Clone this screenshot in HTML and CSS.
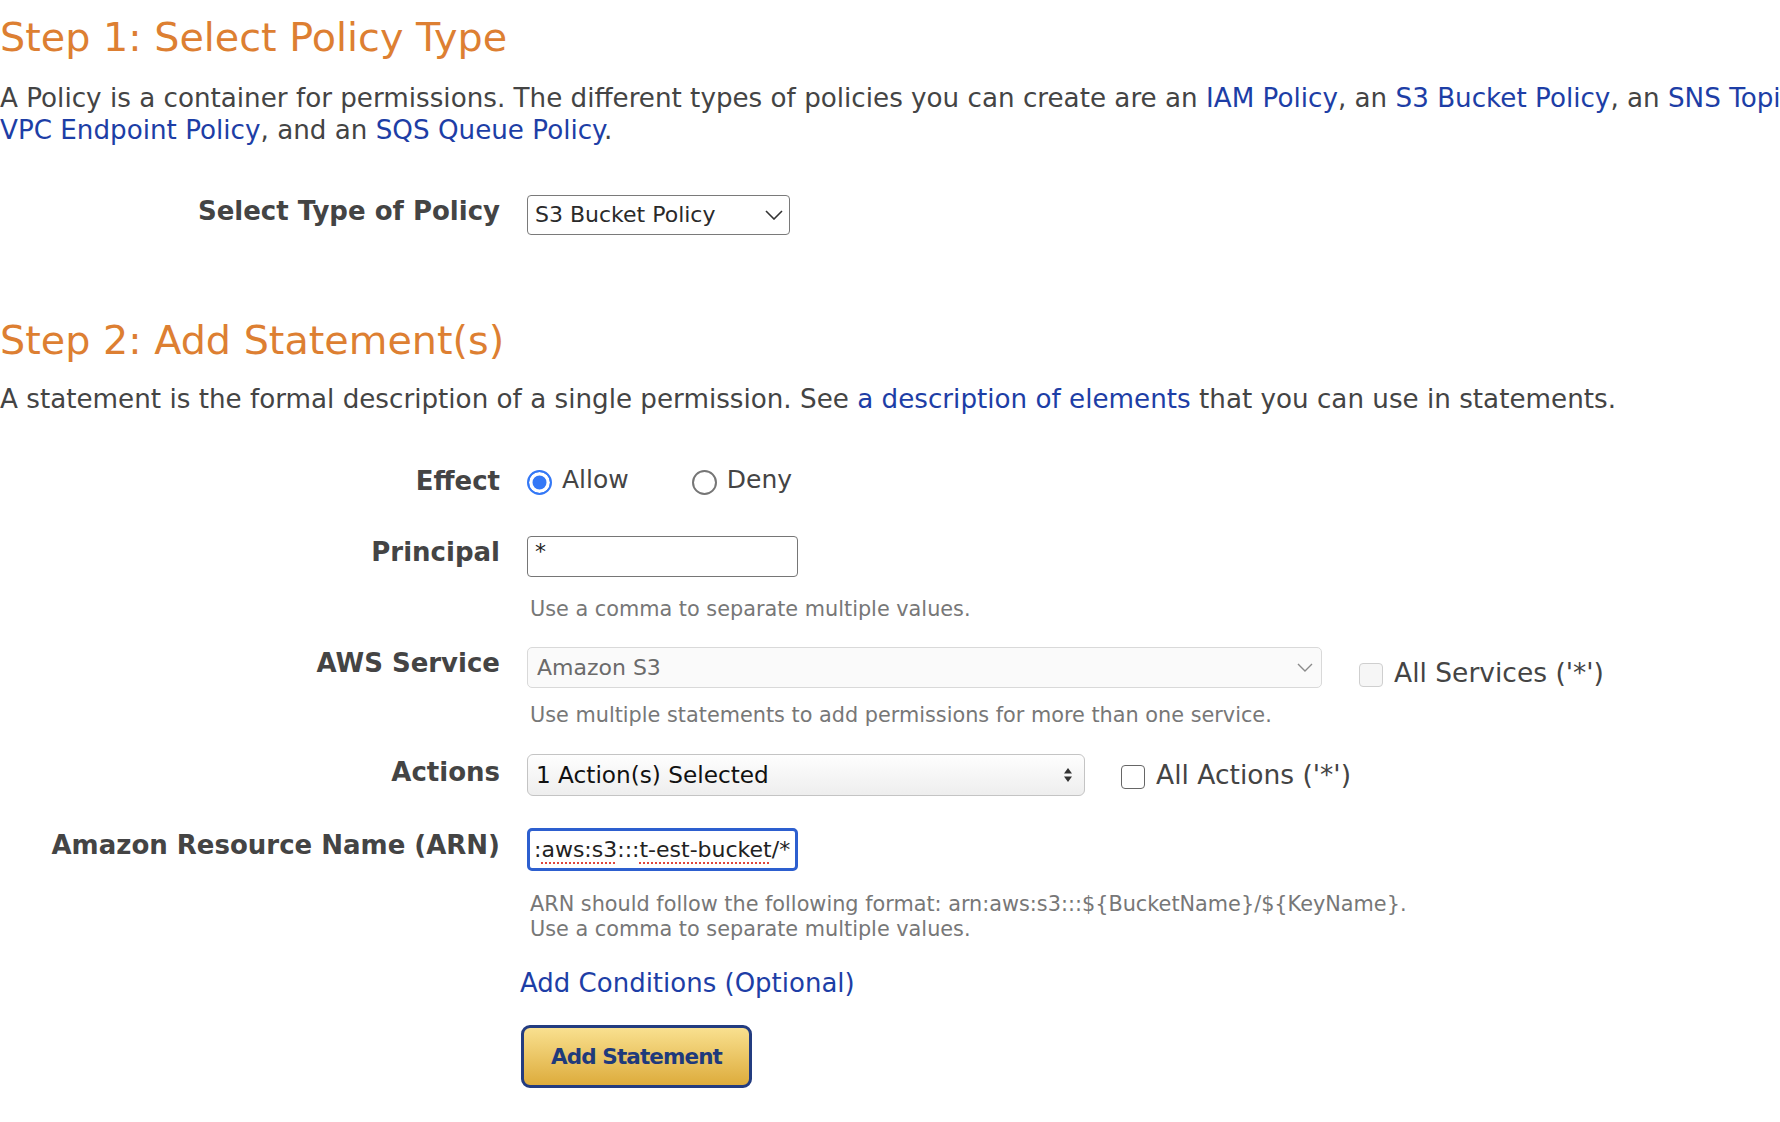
FILE: index.html
```html
<!DOCTYPE html>
<html lang="en">
<head>
<meta charset="utf-8">
<title>AWS Policy Generator</title>
<link rel="stylesheet" href="styles.css">
</head>
<body>
<div class="page">
  <h1 class="step-title">Step 1: Select Policy Type</h1>
  <p class="intro">A Policy is a container for permissions. The different types of policies you can create are an <a href="#">IAM Policy</a>, an <a href="#">S3 Bucket Policy</a>, an <a href="#">SNS Topic Policy</a>, a<br><a href="#">VPC Endpoint Policy</a>, and an <a href="#">SQS Queue Policy</a>.</p>

  <div class="row row--type">
    <label class="label">Select Type of Policy</label>
    <div class="field">
      <div class="select select--type">
        <span>S3 Bucket Policy</span>
        <svg class="chev chev--type" width="18" height="10" viewBox="0 0 18 10"><path d="M1 1 L9 9 L17 1" fill="none" stroke="#333" stroke-width="1.6"/></svg>
      </div>
    </div>
  </div>

  <h1 class="step-title step-title--second">Step 2: Add Statement(s)</h1>
  <p class="intro intro--second">A statement is the formal description of a single permission. See <a href="#">a description of elements</a> that you can use in statements.</p>

  <div class="row row--effect">
    <label class="label">Effect</label>
    <div class="field options">
      <span class="option"><span class="radio radio--on"></span>Allow</span>
      <span class="option"><span class="radio"></span>Deny</span>
    </div>
  </div>

  <div class="row row--principal">
    <label class="label">Principal</label>
    <div class="field">
      <div class="input input--principal">*</div>
      <p class="help help--principal">Use a comma to separate multiple values.</p>
    </div>
  </div>

  <div class="row row--service">
    <label class="label">AWS Service</label>
    <div class="field">
      <div class="control-line">
        <div class="select select--service">
          <span>Amazon S3</span>
          <svg class="chev" width="16" height="9" viewBox="0 0 16 9"><path d="M1 1 L8 8 L15 1" fill="none" stroke="#8a8a8a" stroke-width="1.4"/></svg>
        </div>
        <span class="check-group check-group--services"><span class="checkbox checkbox--disabled"></span>All Services ('*')</span>
      </div>
      <p class="help help--service">Use multiple statements to add permissions for more than one service.</p>
    </div>
  </div>

  <div class="row row--actions">
    <label class="label label--actions">Actions</label>
    <div class="field">
      <div class="control-line">
        <div class="select select--actions">
          <span>1 Action(s) Selected</span>
          <svg class="updown" width="10" height="16" viewBox="0 0 10 16"><path d="M5 1 L9 6.5 L1 6.5 Z M5 15 L9 9.5 L1 9.5 Z" fill="#333"/></svg>
        </div>
        <span class="check-group check-group--actions"><span class="checkbox"></span>All Actions ('*')</span>
      </div>
    </div>
  </div>

  <div class="row row--arn">
    <label class="label label--arn">Amazon Resource Name (ARN)</label>
    <div class="field">
      <div class="input input--arn">:<span class="typo">aws:s3</span>:::<span class="typo">t-est-bucket</span>/*</div>
      <p class="help help--arn">ARN should follow the following format: arn:aws:s3:::${BucketName}/${KeyName}.<br>Use a comma to separate multiple values.</p>
    </div>
  </div>

  <div class="row row--submit">
    <span class="label"></span>
    <div class="field">
      <a href="#" class="conditions">Add Conditions (Optional)</a>
      <button class="btn" type="button">Add Statement</button>
    </div>
  </div>
</div>
</body>
</html>
```

FILE: styles.css
```css
html, body {
  margin: 0;
  padding: 0;
  overflow: hidden;
  background: #ffffff;
}

body {
  font-family: "DejaVu Sans", Verdana, sans-serif;
  color: #444444;
}

a {
  color: #1d3ea6;
  text-decoration: none;
}

.page {
  padding: 0;
}

.step-title {
  font-size: 39.7px;
  line-height: 46px;
  font-weight: normal;
  color: #dd7f32;
  margin: 14px 0 0;
}

.step-title--second {
  margin-top: 82px;
}

.intro {
  font-size: 26.2px;
  line-height: 32px;
  margin: 21.5px 0 0;
  white-space: nowrap;
}

.intro--second {
  margin-top: 20px;
}

.row {
  display: grid;
  grid-template-columns: 500px auto;
  column-gap: 27px;
  align-items: start;
}

.row--type { margin-top: 49.5px; }
.row--effect { margin-top: 50px; }
.row--principal { margin-top: 40px; }
.row--service { margin-top: 25px; }
.row--actions { margin-top: 26px; }
.row--arn { margin-top: 32px; }
.row--submit { margin-top: 25px; }

.label {
  font-size: 26px;
  line-height: 30px;
  font-weight: bold;
  text-align: right;
  color: #444444;
  margin-top: 1px;
}

.label--actions { margin-top: 3px; }
.label--arn { margin-top: 2px; }

.field {
  display: flex;
  flex-direction: column;
  align-items: flex-start;
}

/* selects */
.select {
  box-sizing: border-box;
  display: flex;
  align-items: center;
  justify-content: space-between;
  font-size: 22px;
  line-height: 26px;
}

.select--type {
  width: 263px;
  height: 40px;
  border: 1.5px solid #7a7a7a;
  border-radius: 4px;
  padding: 0 6px 0 7px;
  color: #2a2a2a;
}

.select--service {
  width: 795px;
  height: 41px;
  border: 1.5px solid #d9d9d9;
  border-radius: 5px;
  background: #fafafa;
  color: #6b6b6b;
  padding: 0 8px 0 9px;
}

.select--actions {
  width: 558px;
  height: 42px;
  border: 1.5px solid #c4c4c4;
  border-radius: 6px;
  background: linear-gradient(#fefefe, #eeeeee);
  color: #111111;
  font-size: 23.2px;
  padding: 0 11px 0 8px;
}

.chev {
  flex: none;
}

.updown {
  flex: none;
}

/* inputs */
.input {
  box-sizing: border-box;
  display: flex;
  align-items: flex-start;
  font-size: 22px;
  line-height: 26px;
  color: #222222;
  background: #ffffff;
}

.input--principal {
  width: 271px;
  height: 41px;
  border: 1.5px solid #767676;
  border-radius: 4px;
  padding: 2px 7px 0;
}

.input--arn {
  width: 271px;
  height: 43px;
  border: 3px solid #2d5fcf;
  border-radius: 5px;
  padding: 6px 4px 0 4px;
  white-space: nowrap;
  overflow: hidden;
}

.typo {
  text-decoration: underline dotted #e0473c;
  text-decoration-thickness: 2px;
  text-underline-offset: 5px;
}

/* help text */
.help {
  font-size: 20.8px;
  line-height: 25px;
  color: #777777;
  margin: 0;
  padding-left: 3px;
}

.help--principal { margin-top: 20px; }
.help--service { margin-top: 15px; }
.help--arn { margin-top: 21px; }

/* radios */
.options {
  flex-direction: row;
  align-items: center;
  height: 30px;
  gap: 63px;
  font-size: 25px;
  line-height: 30px;
  margin-top: 0;
}

.option {
  display: flex;
  align-items: center;
  gap: 10px;
}

.radio {
  box-sizing: border-box;
  width: 25px;
  height: 25px;
  border-radius: 50%;
  border: 2px solid #767676;
  background: #ffffff;
  margin-top: 4px;
}

.radio--on {
  border: 2.5px solid #3478f6;
  background: #3478f6;
  box-shadow: inset 0 0 0 3.5px #ffffff;
}

/* checkboxes */
.control-line {
  display: flex;
  align-items: flex-start;
}

.check-group {
  display: flex;
  align-items: center;
  gap: 11px;
  height: 30px;
  font-size: 26.5px;
  line-height: 30px;
  color: #444444;
}

.check-group--services {
  margin-left: 37px;
  margin-top: 11px;
}

.check-group--actions {
  margin-left: 36px;
  margin-top: 6px;
}

.checkbox {
  box-sizing: border-box;
  width: 24px;
  height: 24px;
  border-radius: 4px;
  border: 1.5px solid #666666;
  background: #ffffff;
  margin-top: 3px;
}

.checkbox--disabled {
  border-color: #cfcfcf;
  background: #f6f6f6;
}

/* submit */
.conditions {
  font-size: 26px;
  line-height: 33px;
  margin-left: -7px;
}

.btn {
  box-sizing: border-box;
  width: 231px;
  height: 63px;
  margin-top: 25px;
  margin-left: -6px;
  border: 3px solid #233c80;
  border-radius: 9px;
  background: linear-gradient(#f9e08f, #ddac3c);
  color: #1f3a7b;
  font-family: "DejaVu Sans", Verdana, sans-serif;
  font-weight: bold;
  font-size: 21.5px;
  letter-spacing: -0.9px;
  padding: 0;
}
```
